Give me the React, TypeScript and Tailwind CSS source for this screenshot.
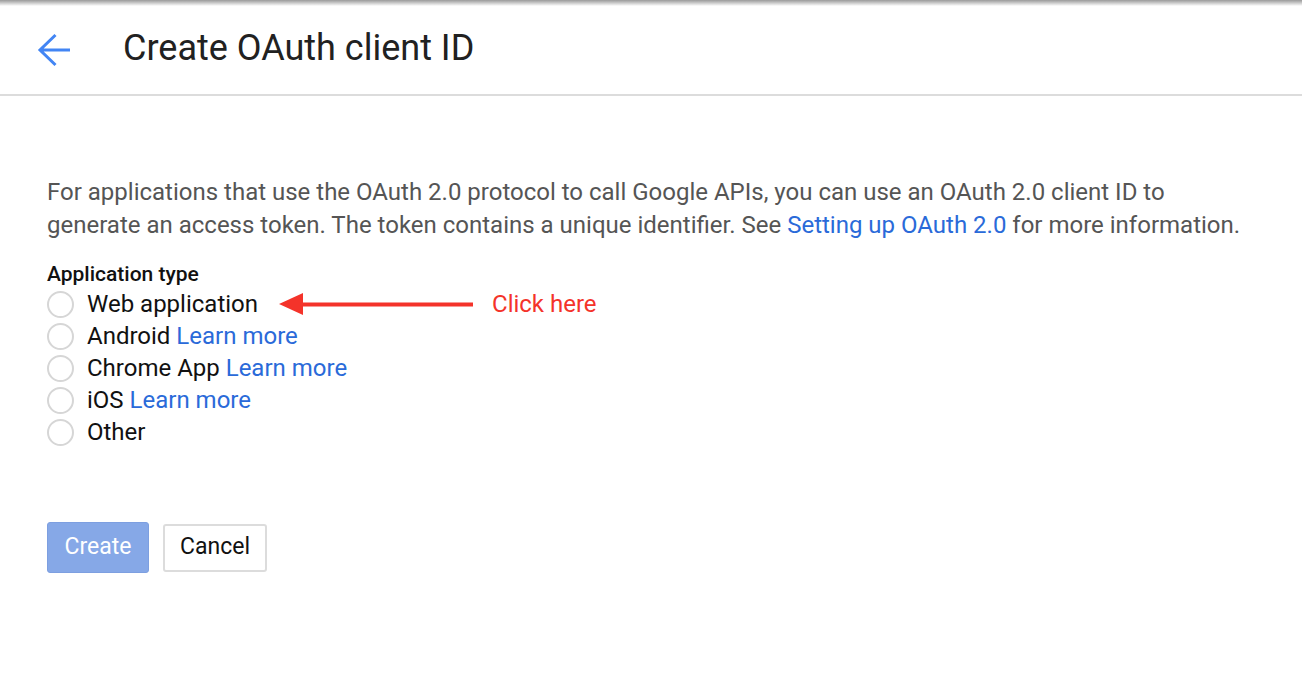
import React from 'react';

const options = [
  { label: 'Web application', learn: false },
  { label: 'Android', learn: true },
  { label: 'Chrome App', learn: true },
  { label: 'iOS', learn: true },
  { label: 'Other', learn: false },
];

const App: React.FC = () => {
  return (
    <div className="w-[1302px] h-[678px] bg-white overflow-hidden font-['Roboto',sans-serif]">
      <div className="h-[6px] bg-gradient-to-b from-[#9a9a9a] to-white" />
      <header className="h-[90px] flex items-center border-b-2 border-[#dcdcdc]">
        <button className="w-[108px] h-full flex items-center pl-[37px]">
          <svg width="34" height="34" viewBox="0 0 34 34" fill="none">
            <path d="M3 17H33M18.5 2 3 17l15.5 15" stroke="#4285f4" strokeWidth="3" />
          </svg>
        </button>
        <h1 className="text-[36px] text-[#212121] ml-[15px] -mt-[4px]">Create OAuth client ID</h1>
      </header>

      <main className="pl-[47px] pt-[80px]">
        <p className="text-[24px] leading-[33px] text-[#555] w-[1230px]">
          For applications that use the OAuth 2.0 protocol to call Google APIs, you can use an OAuth 2.0 client ID to
          <br />
          generate an access token. The token contains a unique identifier. See{' '}
          <a className="text-[#2a6ad9]">Setting up OAuth 2.0</a> for more information.
        </p>

        <div className="mt-[18px] text-[21px] font-medium text-[#111] leading-[28px]">Application type</div>
        <div className="flex flex-col">
          {options.map((o, i) => (
            <div key={o.label} className="flex items-center h-[32px]">
              <span className="w-[27px] h-[27px] rounded-full border-2 border-[#d6d6d6] bg-white" />
              <span className="ml-[13px] text-[24px] text-[#111]">
                {o.label}
                {o.learn && <a className="text-[#2a6ad9]"> Learn more</a>}
              </span>
              {i === 0 && (
                <div className="flex items-center ml-[21px]">
                  <svg width="194" height="22" viewBox="0 0 194 22">
                    <polygon points="0,11 24,0 24,22" fill="#f4332a" />
                    <rect x="22" y="9.5" width="172" height="4" fill="#f4332a" />
                  </svg>
                  <span className="ml-[19px] text-[24px] text-[#f4332a]">Click here</span>
                </div>
              )}
            </div>
          ))}
        </div>

        <div className="flex items-center gap-[14px] mt-[74px]">
          <button className="w-[102px] h-[51px] rounded-[3px] bg-[#86a8e7] border border-[#7d9fe0] text-white text-[23px]">
            Create
          </button>
          <button className="w-[104px] h-[48px] rounded-[3px] bg-white border-2 border-[#dcdcdc] text-[#111] text-[23px]">
            Cancel
          </button>
        </div>
      </main>
    </div>
  );
};

export default App;
